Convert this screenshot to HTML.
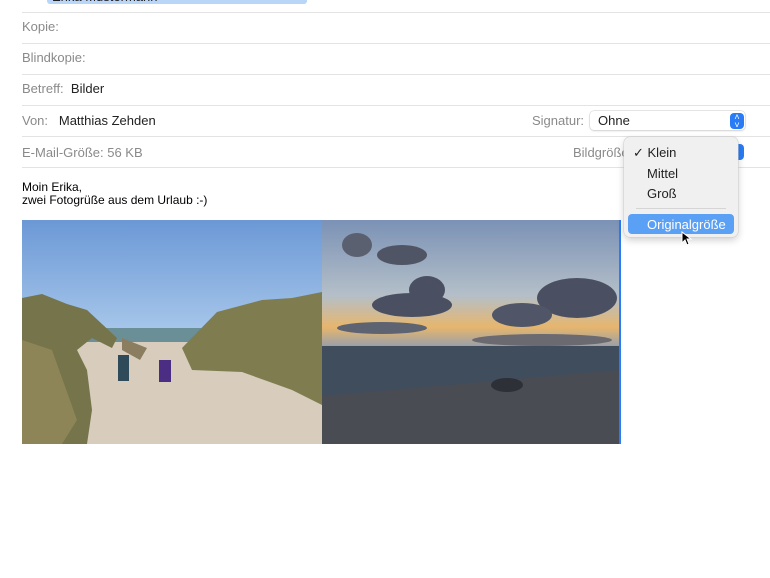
<!DOCTYPE html>
<html><head><meta charset="utf-8"><style>
body{margin:0;width:770px;height:578px;background:#fff;font-family:"Liberation Sans",sans-serif;position:relative;overflow:hidden}
.a{position:absolute}
.line{position:absolute;left:22px;right:0;height:1px;background:#e3e3e3}
.lbl{position:absolute;color:#8a8a8a;font-size:13px}
.val{color:#222}
</style></head><body>
<div class="a" style="left:47px;top:-6px;width:260px;height:10px;background:#b9d5f8;border-radius:3px"></div>
<div class="a" style="left:52px;top:-11px;font-size:13px;color:#222">Erika Mustermann</div>
<div class="line" style="top:12px"></div>
<div class="lbl" style="left:22px;top:19px">Kopie:</div>
<div class="line" style="top:43px"></div>
<div class="lbl" style="left:22px;top:50px">Blindkopie:</div>
<div class="line" style="top:74px"></div>
<div class="lbl" style="left:22px;top:81px">Betreff:&nbsp; <span class="val">Bilder</span></div>
<div class="line" style="top:105px"></div>
<div class="lbl" style="left:22px;top:113px">Von:&nbsp;&nbsp; <span class="val">Matthias Zehden</span></div>
<div class="lbl" style="left:532px;top:113px">Signatur:</div>
<div class="a" style="left:590px;top:111px;width:155px;height:19px;border-radius:4px;box-shadow:0 0 0 .5px #ccc,0 1px 2px rgba(0,0,0,.15);background:#fff"></div>
<div class="a" style="left:598px;top:113px;font-size:13px;color:#222">Ohne</div>
<div class="a" style="left:730px;top:113px;width:14px;height:16px;border-radius:4px;background:#2a7cf6;color:#fff;font-size:9px;text-align:center;line-height:8px">˄<br>˅</div>
<div class="line" style="top:136px"></div>
<div class="lbl" style="left:22px;top:145px">E-Mail-Größe: 56 KB</div>
<div class="lbl" style="left:573px;top:145px">Bildgröße</div>
<div class="a" style="left:730px;top:144px;width:14px;height:16px;border-radius:4px;background:#2a7cf6"></div>
<div class="line" style="top:167px"></div>
<div class="a" style="left:22px;top:181px;font-size:12px;line-height:13px;color:#000">Moin Erika,<br>zwei Fotogrüße aus dem Urlaub :-)</div>

<svg class="a" style="left:22px;top:220px" width="300" height="224" viewBox="0 0 300 224">
<defs><linearGradient id="s1" x1="0" y1="0" x2="0" y2="1"><stop offset="0" stop-color="#6b98d6"/><stop offset=".5" stop-color="#a7c7ea"/></linearGradient></defs>
<rect width="300" height="224" fill="url(#s1)"/>
<rect y="108" width="300" height="20" fill="#6a8f96"/>
<rect y="122" width="300" height="102" fill="#d8cdbd"/>
<polygon points="0,78 20,74 45,84 65,90 95,118 90,128 70,118 55,130 65,150 70,190 65,224 0,224" fill="#76744a"/>
<polygon points="0,120 30,130 55,200 40,224 0,224" fill="#8d8557"/>
<polygon points="160,128 195,92 240,80 270,78 300,72 300,185 270,170 220,152 170,150" fill="#7f7d4f"/>
<polygon points="100,118 125,128 118,140 100,130" fill="#8a7d60"/>
<rect x="96" y="135" width="11" height="26" fill="#2f4a58"/>
<rect x="137" y="140" width="12" height="22" fill="#4b2e83"/>
</svg>
<svg class="a" style="left:322px;top:220px" width="298" height="224" viewBox="0 0 298 224">
<defs><linearGradient id="s2" gradientUnits="userSpaceOnUse" x1="0" y1="0" x2="0" y2="126"><stop offset="0" stop-color="#7b92b6"/><stop offset=".6" stop-color="#b4bfc8"/><stop offset=".85" stop-color="#e7b66e"/><stop offset="1" stop-color="#9aa0a8"/></linearGradient></defs>
<rect width="298" height="126" fill="url(#s2)"/>
<rect y="126" width="298" height="50" fill="#3f4d5d"/>
<polygon points="0,176 298,150 298,224 0,224" fill="#4a4c54"/>
<ellipse cx="35" cy="25" rx="15" ry="12" fill="#5a6070"/>
<ellipse cx="80" cy="35" rx="25" ry="10" fill="#4f5565"/>
<ellipse cx="90" cy="85" rx="40" ry="12" fill="#4a5062"/>
<ellipse cx="105" cy="70" rx="18" ry="14" fill="#4a5062"/>
<ellipse cx="60" cy="108" rx="45" ry="6" fill="#5d6370"/>
<ellipse cx="255" cy="78" rx="40" ry="20" fill="#4a5062"/>
<ellipse cx="200" cy="95" rx="30" ry="12" fill="#505668"/>
<ellipse cx="220" cy="120" rx="70" ry="6" fill="#6a6a70"/>
<ellipse cx="185" cy="165" rx="16" ry="7" fill="#2e3038"/>
</svg>
<div class="a" style="left:619px;top:220px;width:2px;height:224px;background:#2a7cf6"></div>

<div class="a" style="left:624px;top:137px;width:114px;height:100px;background:#f0f0f0;border-radius:6px;box-shadow:0 0 0 .5px #ccc,0 3px 8px rgba(0,0,0,.2)"></div>
<div class="a" style="left:633px;top:145px;font-size:13px;color:#222">✓ Klein</div>
<div class="a" style="left:647px;top:166px;font-size:13px;color:#222">Mittel</div>
<div class="a" style="left:647px;top:186px;font-size:13px;color:#222">Groß</div>
<div class="a" style="left:636px;top:208px;width:90px;height:1px;background:#d5d5d5"></div>
<div class="a" style="left:628px;top:214px;width:106px;height:20px;background:#5aa0f5;border-radius:4px"></div>
<div class="a" style="left:647px;top:217px;font-size:13px;color:#fff">Originalgröße</div>
<svg class="a" style="left:681px;top:231px" width="12" height="16"><path d="M1,1 L1,12 L4,9 L6,14 L8,13 L6,8 L10,8 Z" fill="#000" stroke="#fff" stroke-width="1"/></svg>
</body></html>
